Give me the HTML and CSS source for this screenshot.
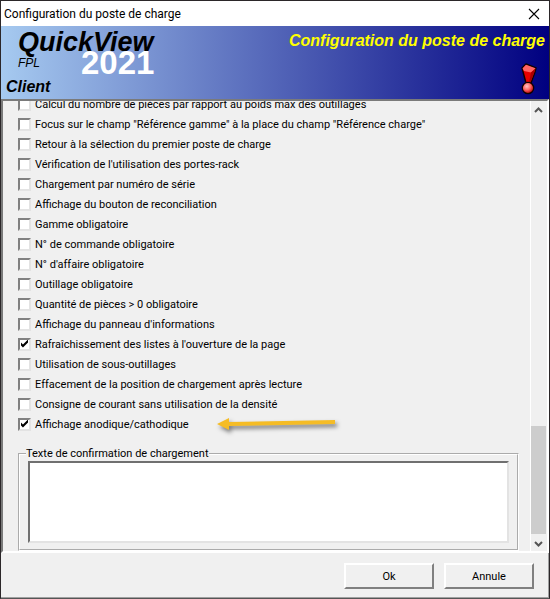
FILE: index.html
```html
<!DOCTYPE html>
<html lang="fr">
    <head>
        <meta charset="UTF-8" />
        <meta name="viewport" content="width=device-width, initial-scale=1.0" />
        <title>Configuration du poste de charge</title>
        <link rel="stylesheet" href="styles.css">
    </head>
    <body>
        <div class="window">
            <div class="titlebar">
                <span>Configuration du poste de charge</span>
                <button class="close" type="button" aria-label="Fermer">
                    <svg width="12" height="12" viewBox="0 0 12 12">
                        <path d="M1 1L11 11M11 1L1 11" stroke="#000" stroke-width="1.1" />
                    </svg>
                </button>
            </div>

            <!-- banner -->
            <header class="banner">
                <div class="brand">
                    <div class="logo">QuickView</div>
                    <div class="fpl">FPL</div>
                    <div class="client">Client</div>
                    <div class="year">2021</div>
                </div>
                <div class="banner_right">
                    <h1>Configuration du poste de charge</h1>
                    <svg class="alert" width="18" height="32" viewBox="0 0 18 32">
                        <defs>
                            <radialGradient id="ball" cx="0.4" cy="0.35" r="0.65">
                                <stop offset="0" stop-color="#ffc4c4" />
                                <stop offset="0.5" stop-color="#f66" />
                                <stop offset="1" stop-color="#b00000" />
                            </radialGradient>
                        </defs>
                        <path d="M2 5L6 1L16 5L15 9L11 20H6Z" fill="#e80000" stroke="#100000" stroke-width="1.4" stroke-linejoin="round" />
                        <path d="M2.500 5.500L6 1.700L15.500 5.200L11 9.500L4 8Z" fill="#ff6464" />
                        <path d="M11 9.500L15.500 5.500L14.500 9L10.500 19.500H9Z" fill="#a80000" />
                        <circle cx="8" cy="25" r="5.700" fill="url(#ball)" stroke="#100000" stroke-width="1.2" />
                    </svg>
                </div>
            </header>

            <!-- options -->
            <main class="pane">
                <div class="content">
                    <ul class="options">
                        <li><label><input type="checkbox" />Calcul du nombre de pièces par rapport au poids max des outillages</label></li>
                        <li><label><input type="checkbox" />Focus sur le champ "Référence gamme" à la place du champ "Référence charge"</label></li>
                        <li><label><input type="checkbox" />Retour à la sélection du premier poste de charge</label></li>
                        <li><label><input type="checkbox" />Vérification de l'utilisation des portes-rack</label></li>
                        <li><label><input type="checkbox" />Chargement par numéro de série</label></li>
                        <li><label><input type="checkbox" />Affichage du bouton de reconciliation</label></li>
                        <li><label><input type="checkbox" />Gamme obligatoire</label></li>
                        <li><label><input type="checkbox" />N° de commande obligatoire</label></li>
                        <li><label><input type="checkbox" />N° d'affaire obligatoire</label></li>
                        <li><label><input type="checkbox" />Outillage obligatoire</label></li>
                        <li><label><input type="checkbox" />Quantité de pièces &gt; 0 obligatoire</label></li>
                        <li><label><input type="checkbox" />Affichage du panneau d'informations</label></li>
                        <li><label><input type="checkbox" checked />Rafraîchissement des listes à l'ouverture de la page</label></li>
                        <li><label><input type="checkbox" />Utilisation de sous-outillages</label></li>
                        <li><label><input type="checkbox" />Effacement de la position de chargement après lecture</label></li>
                        <li><label><input type="checkbox" />Consigne de courant sans utilisation de la densité</label></li>
                        <li>
                            <label><input type="checkbox" checked />Affichage anodique/cathodique</label>
                            <svg class="arrow" width="118" height="20" viewBox="0 0 118 20">
                                <path d="M0 10L12 4V8L118 6V10L12 12V16Z" fill="#f5bc25" />
                            </svg>
                        </li>
                    </ul>
                    <fieldset>
                        <legend><label for="confirm">Texte de confirmation de chargement</label></legend>
                        <textarea id="confirm"></textarea>
                    </fieldset>
                </div>
                <div class="scrollbar">
                    <svg width="15" height="17" viewBox="0 0 15 17">
                        <path d="M4 11L7.500 7.500L11 11" fill="none" stroke="#555" stroke-width="2" />
                    </svg>
                    <div class="track"><div class="thumb"></div></div>
                    <svg width="15" height="17" viewBox="0 0 15 17">
                        <path d="M4 8L7.500 11.500L11 8" fill="none" stroke="#555" stroke-width="2" />
                    </svg>
                </div>
            </main>

            <footer class="buttons">
                <button type="button">Ok</button>
                <button type="button">Annule</button>
            </footer>
        </div>
    </body>
</html>
```
FILE: styles.css
```css
* {
    margin: 0px;
    padding: 0px;
    box-sizing: border-box;
}

body {
    font-family: Roboto, Tahoma, sans-serif;
    font-size: 11px;
    color: #000;
}

.window {
    display: flex;
    flex-direction: column;
    height: 100vh;
    background-color: #f0f0f0;
    border: 1px solid #2b2729;
    border-bottom-color: #555;
}

/* title bar */
.titlebar {
    display: flex;
    justify-content: space-between;
    align-items: center;
    flex: none;
    height: 25px;
    padding: 0px 9px 0px 3px;
    background-color: #fff;
    font-size: 12px;
}
.close {
    display: flex;
    border: none;
    background: none;
}

/* banner */
.banner {
    display: flex;
    justify-content: space-between;
    flex: none;
    height: 73px;
    background: linear-gradient(to right, #a6caf0, #000080);
    font-family: "Liberation Sans", Arial, sans-serif;
    font-style: italic;
    font-weight: bold;
}
.brand {
    position: relative;
    padding: 2px 0px 0px 5px;
}
.logo {
    padding-left: 12px;
    font-size: 27px;
    line-height: 28px;
}
.fpl {
    padding-left: 12px;
    font-size: 12px;
    font-weight: normal;
    line-height: 14px;
}
.client {
    margin-top: 8px;
    font-size: 16px;
    line-height: 18px;
}
/* year sits over the end of the logo */
.year {
    position: absolute;
    left: 80px;
    top: 19px;
    color: #fff;
    font-size: 33px;
    font-style: normal;
    line-height: 36px;
}
.banner_right {
    display: flex;
    flex-direction: column;
    align-items: flex-end;
    padding: 5px 4px 0px 0px;
}
.banner h1 {
    color: #ff0;
    font-size: 16px;
    line-height: 20px;
}
.alert {
    margin: 12px 7px 0px 0px;
}

/* scrolled pane */
.pane {
    display: flex;
    flex: 1;
    min-height: 0px;
    overflow: hidden;
    border: 2px solid;
    border-color: #7a7a7a #fff #fff #7a7a7a;
}
.content {
    display: flex;
    flex-direction: column;
    justify-content: flex-end;
    flex: 1;
    padding: 0px 11px 0px 15px;
}
.options {
    list-style: none;
}
.options li {
    display: flex;
    align-items: center;
    height: 20px;
    white-space: nowrap;
}
.options label {
    display: flex;
    align-items: center;
    gap: 4px;
}
input[type="checkbox"] {
    appearance: none;
    width: 13px;
    height: 13px;
    background-color: #fff;
    border: 2px solid;
    border-color: #808080 #e3e3e3 #e3e3e3 #808080;
}
input[type="checkbox"]:checked::before {
    content: "";
    display: block;
    width: 9px;
    height: 9px;
    background-color: #000;
    clip-path: polygon(11% 33%, 33% 55%, 89% 0%, 89% 34%, 33% 89%, 11% 67%);
}
.arrow {
    margin-left: 28px;
    filter: drop-shadow(2px 3px 2px rgba(0, 0, 0, 0.5));
}

fieldset {
    height: 105px;
    margin-top: 12px;
    padding: 0px 8px 6px;
    border: 2px groove #fff;
}
legend {
    margin-left: -2px;
    height: 15px;
    line-height: 15px;
}
textarea {
    display: block;
    width: 100%;
    height: 82px;
    resize: none;
    background-color: #fff;
    border: 2px solid;
    border-color: #707070 #e3e3e3 #e3e3e3 #707070;
}

/* scrollbar */
.scrollbar {
    display: flex;
    flex-direction: column;
    width: 17px;
    border-left: 1px solid #fff;
}
.track {
    display: flex;
    flex-direction: column;
    justify-content: flex-end;
    flex: 1;
}
.thumb {
    width: 15px;
    height: 26%;
    background-color: #cdcdcd;
}

/* bottom buttons */
.buttons {
    display: flex;
    justify-content: flex-end;
    gap: 10px;
    flex: none;
    height: 45px;
    padding: 10px 14px 0px 0px;
    border-right: 1px solid #a0a0a0;
    border-bottom: 1px solid #a0a0a0;
}
.buttons button {
    width: 90px;
    height: 26px;
    background-color: #f0f0f0;
    border: 2px solid;
    border-color: #fff #808080 #808080 #fff;
    font: inherit;
}
```
